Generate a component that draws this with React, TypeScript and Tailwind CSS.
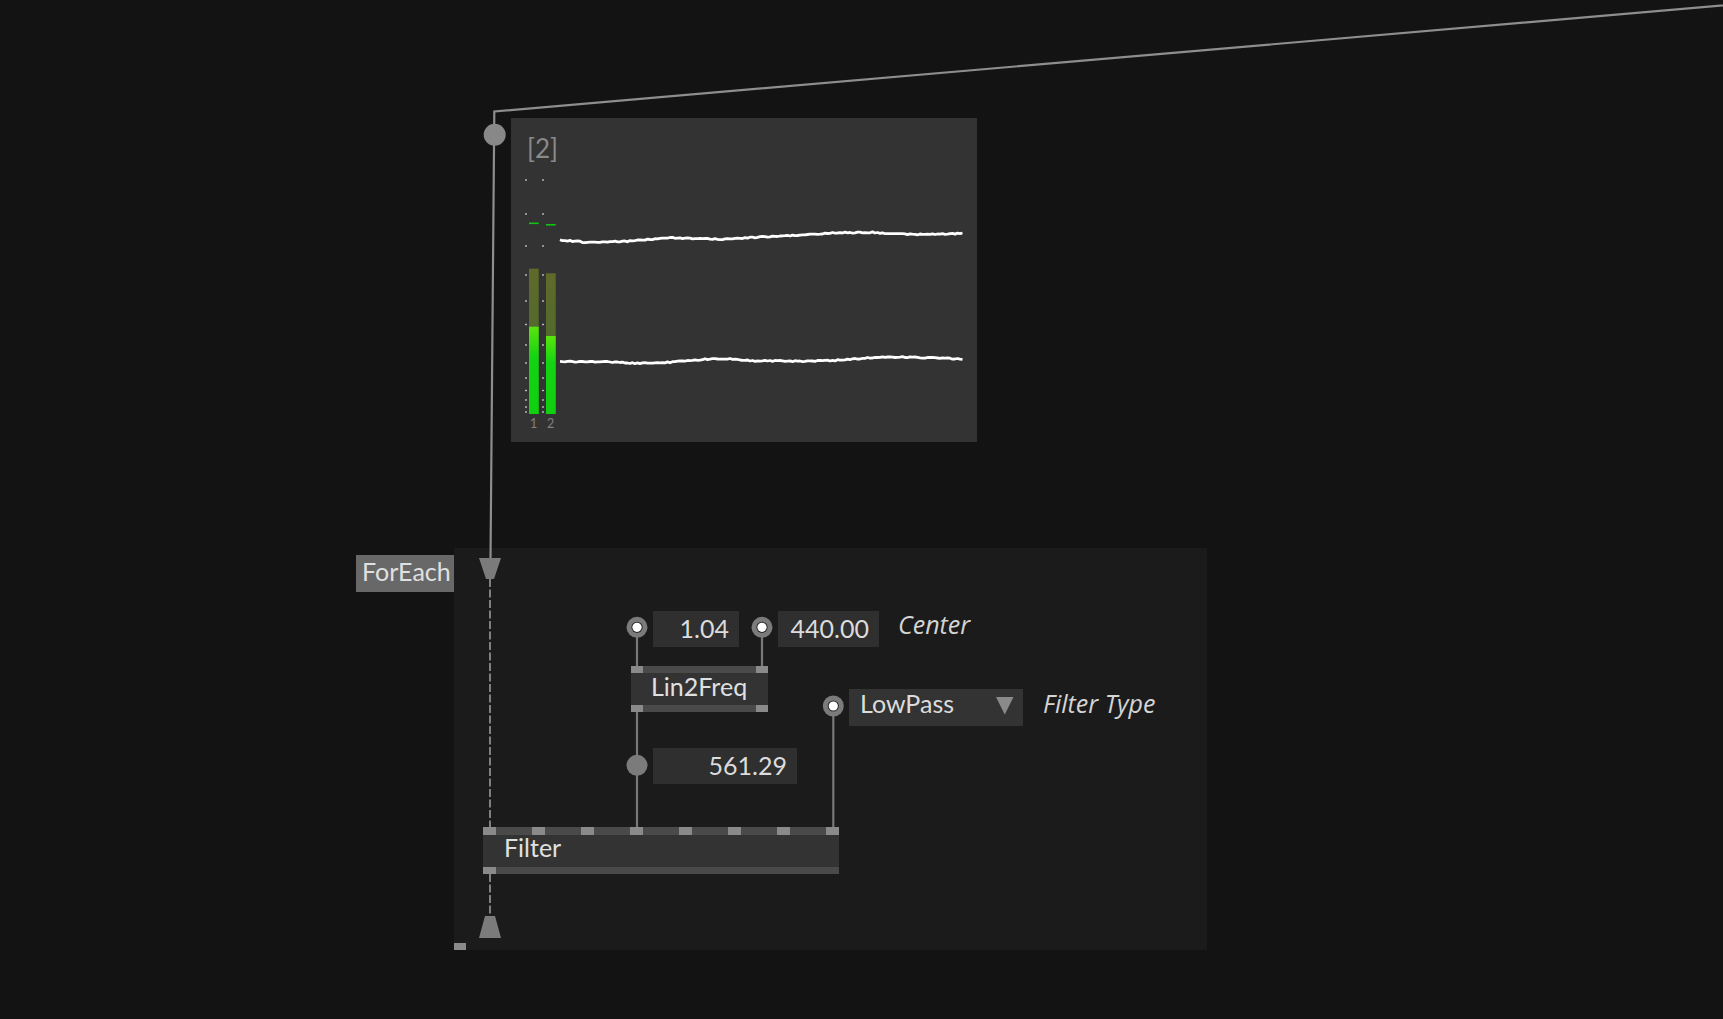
import React from "react";

type Pt = [number, number];

function lcg(seed: number) {
  let s = seed;
  return () => {
    s = (s * 1664525 + 1013904223) % 4294967296;
    return s / 4294967296;
  };
}

function buildWave(anchors: Pt[], seed: number, ox: number, oy: number) {
  const r = lcg(seed);
  const out: string[] = [];
  const x0 = anchors[0][0];
  const x1 = anchors[anchors.length - 1][0];
  for (let x = x0; x <= x1; x += 2.5) {
    let i = 0;
    while (i < anchors.length - 2 && anchors[i + 1][0] < x) i++;
    const [ax, ay] = anchors[i];
    const [bx, by] = anchors[i + 1];
    const t = Math.min(1, Math.max(0, (x - ax) / (bx - ax)));
    const y = ay + (by - ay) * t + (r() - 0.5) * 1.1;
    out.push(`${(x - ox).toFixed(1)},${(y - oy).toFixed(1)}`);
  }
  return out.join(" ");
}

const upper: Pt[] = [
  [560, 240], [586.7, 242.3], [626.7, 241.3], [670, 237.7], [720, 239.3],
  [746.7, 237.7], [803.3, 235], [836.7, 232.7], [870, 232.3], [903.3, 234.3],
  [936.7, 234.3], [964.3, 233.3],
];
const lower: Pt[] = [
  [560, 361.7], [603.3, 361.7], [636.7, 363.3], [670, 362.3], [703.3, 359.3],
  [730, 358.7], [753.3, 360.7], [803.3, 361.3], [836.7, 360.3], [870, 357.7],
  [903.3, 357], [936.7, 358], [964.3, 359.3],
];

const ticks = [180, 214, 246, 275, 301, 324.5, 345, 363, 378, 390.5, 400, 407, 412];

function Ring({ cx, cy }: { cx: number; cy: number }) {
  return (
    <g>
      <circle cx={cx} cy={cy} r={10.5} fill="#7b7b7b" />
      <circle cx={cx} cy={cy} r={5.6} fill="#2a2a2a" />
      <circle cx={cx} cy={cy} r={4.6} fill="#ffffff" />
    </g>
  );
}

function Scope() {
  const ox = 511;
  const oy = 118;
  return (
    <div className="absolute left-[511px] top-[118px] w-[466px] h-[324px] bg-[#333333]">
      <div className="absolute left-[16px] top-[15px] text-[26px] leading-[30px] text-[#8a8a8a]">[2]</div>
      <svg className="absolute left-0 top-0" width={466} height={324} viewBox="0 0 466 324">
        <defs>
          <linearGradient id="dark" x1="0" y1="0" x2="0" y2="1">
            <stop offset="0" stopColor="#5f6a2a" />
            <stop offset="1" stopColor="#436a30" />
          </linearGradient>
          <linearGradient id="bright" x1="0" y1="0" x2="0" y2="1">
            <stop offset="0" stopColor="#5ae40e" />
            <stop offset="0.35" stopColor="#14d312" />
            <stop offset="1" stopColor="#0fd00f" />
          </linearGradient>
        </defs>
        {ticks.map((t, i) => (
          <g key={i}>
            <rect x={526 - ox - 1} y={t - oy - 0.7} width={2} height={1.4} fill="#bdbdbd" />
            <rect x={543 - ox - 1} y={t - oy - 0.7} width={2} height={1.4} fill="#bdbdbd" />
          </g>
        ))}
        <rect x={529 - ox} y={268.7 - oy} width={9.7} height={414 - 268.7} fill="url(#dark)" />
        <rect x={529 - ox} y={326.7 - oy} width={9.7} height={414 - 326.7} fill="url(#bright)" />
        <rect x={546 - ox} y={273.3 - oy} width={9.7} height={414 - 273.3} fill="url(#dark)" />
        <rect x={546 - ox} y={336 - oy} width={9.7} height={414 - 336} fill="url(#bright)" />
        <rect x={529 - ox} y={222.5 - oy} width={9.7} height={1.6} fill="#12c412" />
        <rect x={546 - ox} y={224 - oy} width={9.7} height={1.6} fill="#12c412" />
        <text x={533.5 - ox} y={427.5 - oy} fill="#808080" fontSize={12.5} textAnchor="middle" fontFamily="Lato, sans-serif">1</text>
        <text x={550.5 - ox} y={427.5 - oy} fill="#808080" fontSize={12.5} textAnchor="middle" fontFamily="Lato, sans-serif">2</text>
        <polyline points={buildWave(upper, 7, ox, oy)} fill="none" stroke="#ffffff" strokeWidth={2.8} strokeLinejoin="round" />
        <polyline points={buildWave(lower, 13, ox, oy)} fill="none" stroke="#ffffff" strokeWidth={2.8} strokeLinejoin="round" />
      </svg>
    </div>
  );
}

function ValueBox({ left, top, width, value }: { left: string; top: string; width: string; value: string }) {
  return (
    <div
      className={`absolute h-[36px] bg-[#2f2f2f] text-[#dcdcdc] text-[25px] leading-[34px] text-right pr-[10px] ${left} ${top} ${width}`}
    >
      {value}
    </div>
  );
}

export default function App() {
  return (
    <div className="relative w-[1723px] h-[1019px] bg-[#131313] overflow-hidden font-['Lato',sans-serif]">
      <div className="absolute left-[454px] top-[548px] w-[753px] h-[402px] bg-[#1b1b1b]" />
      <div className="absolute left-[356px] top-[555px] w-[98px] h-[37px] bg-[#686868] text-[#e0e0e0] text-[25px] leading-[32px] pl-[6px]">
        ForEach
      </div>
      <div className="absolute left-[454px] top-[943px] w-[12px] h-[7px] bg-[#8a8a8a]" />

      <Scope />

      <svg className="absolute left-0 top-0 pointer-events-none" width={1723} height={1019} viewBox="0 0 1723 1019">
        <polyline points="1800,-1.3 494.3,111.5 490.5,560" fill="none" stroke="#8e8e8e" strokeWidth={2.2} />
        <circle cx={494.7} cy={134.7} r={11} fill="#888888" />
        <polygon points="479,558 501,558 494,579 486,579" fill="#7b7b7b" />
        <line x1={490} y1={579} x2={490} y2={827} stroke="#808080" strokeWidth={2} strokeDasharray="8 2.5" />
        <line x1={490} y1={874} x2={490} y2={916} stroke="#808080" strokeWidth={2} strokeDasharray="8 2.5" />
        <polygon points="485,916 495,916 501,938 479,938" fill="#7b7b7b" />
        <line x1={637} y1={627} x2={637} y2={666} stroke="#787878" strokeWidth={2.2} />
        <line x1={762} y1={627} x2={762} y2={666} stroke="#787878" strokeWidth={2.2} />
        <line x1={637} y1={712} x2={637} y2={827} stroke="#787878" strokeWidth={2.2} />
        <line x1={833.3} y1={706} x2={833.3} y2={827} stroke="#787878" strokeWidth={2.2} />
        <Ring cx={637} cy={627.3} />
        <Ring cx={762} cy={627.3} />
        <Ring cx={833.3} cy={706} />
        <circle cx={637} cy={765.3} r={10.5} fill="#7b7b7b" />
      </svg>

      <ValueBox left="left-[653px]" top="top-[611px]" width="w-[86px]" value="1.04" />
      <ValueBox left="left-[778px]" top="top-[611px]" width="w-[101px]" value="440.00" />
      <ValueBox left="left-[653px]" top="top-[748px]" width="w-[144px]" value="561.29" />

      <div className="absolute left-[898px] top-[606px] font-['Open_Sans',sans-serif] text-[25px] leading-[36px] italic text-[#d4d4d4]">
        Center
      </div>

      <div className="absolute left-[631px] top-[666px] w-[137px] flex flex-col">
        <div className="h-[7px] bg-[#4a4a4a] flex justify-between">
          <div className="w-[12px] h-full bg-[#8a8a8a]" />
          <div className="w-[12px] h-full bg-[#8a8a8a]" />
        </div>
        <div className="h-[32px] bg-[#333333] text-[#e0e0e0] text-[25px] leading-[26px] pl-[20px]">Lin2Freq</div>
        <div className="h-[7px] bg-[#4a4a4a] flex justify-between">
          <div className="w-[12px] h-full bg-[#8a8a8a]" />
          <div className="w-[12px] h-full bg-[#8a8a8a]" />
        </div>
      </div>

      <div className="absolute left-[849px] top-[689px] w-[174px] h-[37px] bg-[#333333] flex items-start justify-between pl-[11px] pr-[9px]">
        <span className="text-[25px] leading-[29px] text-[#dcdcdc]">LowPass</span>
        <svg width={18} height={18} viewBox="0 0 18 18" className="mt-[8px]">
          <polygon points="0,0 17.5,0 8.75,17.5" fill="#8a8a8a" />
        </svg>
      </div>
      <div className="absolute left-[1043px] top-[685px] font-['Open_Sans',sans-serif] text-[25px] leading-[36px] italic text-[#d4d4d4]">
        Filter Type
      </div>

      <div className="absolute left-[483px] top-[827px] w-[356px] flex flex-col">
        <div className="h-[8px] bg-[#4a4a4a] flex justify-between">
          <div className="w-[12.5px] h-full bg-[#8a8a8a]" />
          <div className="w-[12.5px] h-full bg-[#8a8a8a]" />
          <div className="w-[12.5px] h-full bg-[#8a8a8a]" />
          <div className="w-[12.5px] h-full bg-[#8a8a8a]" />
          <div className="w-[12.5px] h-full bg-[#8a8a8a]" />
          <div className="w-[12.5px] h-full bg-[#8a8a8a]" />
          <div className="w-[12.5px] h-full bg-[#8a8a8a]" />
          <div className="w-[12.5px] h-full bg-[#8a8a8a]" />
        </div>
        <div className="h-[32px] bg-[#333333] text-[#e0e0e0] text-[25px] leading-[24px] pl-[21px]">Filter</div>
        <div className="h-[7px] bg-[#4a4a4a] flex">
          <div className="w-[12.5px] h-full bg-[#8a8a8a]" />
        </div>
      </div>
    </div>
  );
}
